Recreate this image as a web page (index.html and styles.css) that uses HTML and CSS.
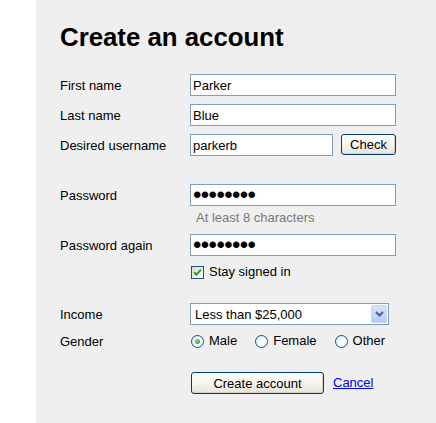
FILE: index.html
```html
<!DOCTYPE html>
<html lang="en">
<head>
<meta charset="utf-8">
<title>Create an account</title>
<link rel="stylesheet" href="styles.css">
</head>
<body>
<main class="panel">
  <h1 class="title">Create an account</h1>
  <form class="form">
    <div class="row row-first">
      <label class="label" for="first">First name</label>
      <input class="text" id="first" type="text" value="Parker">
    </div>
    <div class="row">
      <label class="label" for="last">Last name</label>
      <input class="text" id="last" type="text" value="Blue">
    </div>
    <div class="row">
      <label class="label" for="user">Desired username</label>
      <div class="inline">
        <input class="text text-short" id="user" type="text" value="parkerb">
        <button class="btn btn-check" type="button">Check</button>
      </div>
    </div>
    <div class="row row-section">
      <label class="label" for="pw">Password</label>
      <input class="text pass" id="pw" type="password" value="parkerbl">
    </div>
    <div class="hint-row">
      <span class="hint">At least 8 characters</span>
    </div>
    <div class="row row-after-hint">
      <label class="label" for="pw2">Password again</label>
      <input class="text pass" id="pw2" type="password" value="parkerbl">
    </div>
    <div class="row row-check">
      <span class="label"></span>
      <label class="opt">
        <span class="box"><svg width="9" height="9" viewBox="0 0 9 9"><path d="M1 4.2 L3.4 6.6 L8 1.6" fill="none" stroke="#21a121" stroke-width="2.1"/></svg></span>
        <span>Stay signed in</span>
      </label>
    </div>
    <div class="row row-section2">
      <label class="label" for="income">Income</label>
      <div class="select">
        <span class="select-text">Less than $25,000</span>
        <span class="select-arrow"><svg width="9" height="6" viewBox="0 0 9 6"><path d="M1 1 L4.5 4.5 L8 1" fill="none" stroke="#4d6185" stroke-width="2"/></svg></span>
      </div>
    </div>
    <div class="row row-gender">
      <span class="label">Gender</span>
      <div class="radios">
        <label class="opt radio-opt"><span class="radio checked"></span><span>Male</span></label>
        <label class="opt radio-opt"><span class="radio"></span><span>Female</span></label>
        <label class="opt radio-opt"><span class="radio"></span><span>Other</span></label>
      </div>
    </div>
    <div class="row row-actions">
      <span class="label"></span>
      <div class="actions">
        <button class="btn btn-create" type="button">Create account</button>
        <a class="cancel" href="#">Cancel</a>
      </div>
    </div>
  </form>
</main>
</body>
</html>
```

FILE: styles.css
```css
* { box-sizing: border-box; }
html, body { margin: 0; padding: 0; background: #ffffff; }
body {
  font-family: "Liberation Sans", Arial, sans-serif;
  font-size: 13px;
  color: #000;
}
.panel {
  margin-left: 36px;
  min-height: 423px;
  background: #efefef;
  padding: 22px 0 0 24px;
}
.title {
  margin: 0;
  font-size: 25.8px;
  line-height: 30px;
  font-weight: bold;
}
.form { display: flex; flex-direction: column; }
.row {
  display: flex;
  align-items: center;
  height: 22px;
  margin-top: 8px;
}
.row-first { margin-top: 22px; }
.row-section { margin-top: 28px; }
.row-after-hint { margin-top: 8px; }
.row-check { margin-top: 5px; }
.row-section2 { margin-top: 20px; }
.row-gender { margin-top: 5px; }
.row-actions { margin-top: 20px; }
.label {
  width: 130px;
  flex: none;
  line-height: 16px;
  padding-top: 1px;
}
.text {
  width: 206px;
  height: 22px;
  border: 1px solid #7f9db9;
  background: #fff;
  padding: 0 2px;
  margin: 0;
  font-family: "Liberation Sans", Arial, sans-serif;
  font-size: 13px;
  color: #000;
  outline: none;
}
.text-short { width: 143px; }
.pass {
  font-size: 24px;
  line-height: 20px;
  letter-spacing: -0.6px;
  padding: 0 1px 0 2px;
}
.inline { display: flex; align-items: center; gap: 8px; }
.btn {
  font-family: "Liberation Sans", Arial, sans-serif;
  font-size: 13px;
  color: #000;
  border: 1px solid #003c74;
  border-radius: 3px;
  background: linear-gradient(#ffffff 0%, #f6f5f0 50%, #e6e4da 100%);
  padding: 0;
  margin: 0;
  height: 21px;
  line-height: 17px;
  box-shadow: inset -1px -1px 0 #d6d0c2;
}
.btn-check { width: 55px; margin-top: -1px; }
.btn-create { width: 133px; height: 22px; margin-left: 1px; }
.hint-row {
  margin-top: 4px;
  height: 16px;
  line-height: 16px;
  padding-left: 136px;
}
.hint { color: #7a7a7a; }
.opt {
  display: inline-flex;
  align-items: center;
  line-height: 16px;
}
.box {
  width: 13px;
  height: 13px;
  border: 1px solid #1c5180;
  background: linear-gradient(135deg, #dcdcd6, #ffffff);
  display: inline-flex;
  align-items: center;
  justify-content: center;
  margin-left: 1px;
  margin-right: 5px;
}
.select {
  position: relative;
  width: 199px;
  height: 22px;
  border: 1px solid #7f9db9;
  background: #fff;
  display: flex;
  align-items: center;
}
.select-text { padding-left: 4px; line-height: 16px; padding-top: 1px; }
.select-arrow {
  position: absolute;
  right: 1px;
  top: 1px;
  width: 16px;
  height: 18px;
  border-radius: 2px;
  background: linear-gradient(#d8e4fe, #b7c9f5);
  border: 1px solid #c6d5fb;
  display: flex;
  align-items: center;
  justify-content: center;
}
.radios { display: flex; align-items: center; }
.radio-opt { margin-right: 17px; }
.radio {
  width: 13px;
  height: 13px;
  border-radius: 50%;
  border: 1px solid #1c5180;
  background: radial-gradient(circle at 65% 65%, #ffffff 30%, #dcdcd6 100%);
  margin-left: 1px;
  margin-right: 5px;
  display: inline-flex;
  align-items: center;
  justify-content: center;
}
.radio.checked::after {
  content: "";
  width: 5px;
  height: 5px;
  border-radius: 50%;
  background: radial-gradient(circle at 40% 40%, #6ede6e, #1f9a1f);
}
.actions { display: flex; align-items: center; gap: 9px; }
.cancel { color: #0000ee; text-decoration: underline; line-height: 16px; }
```
